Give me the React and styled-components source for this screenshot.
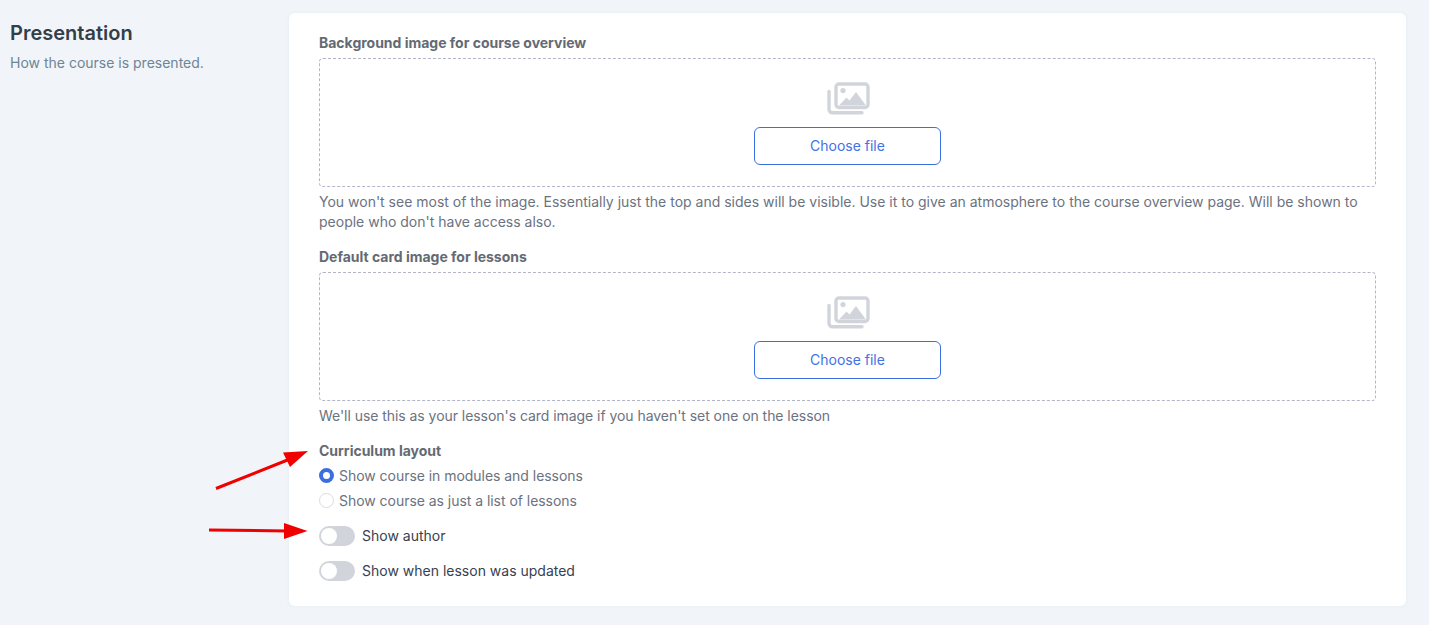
import React from "react";
import styled, { createGlobalStyle } from "styled-components";

const Global = createGlobalStyle`
  html, body { margin: 0; padding: 0; background: #f1f5f9; }
  body { font-family: Inter, "Liberation Sans", sans-serif; font-size: 14px; }
`;

const Page = styled.div`
  position: relative;
  width: 1429px;
  height: 625px;
  overflow: hidden;
  box-sizing: border-box;
  padding: 13px 23px 19px 10px;
  display: grid;
  grid-template-columns: 279px 1117px;
  background: #f1f5f9;
`;
const Intro = styled.div`
  padding-top: 6px;
`;
const Title = styled.h2`
  margin: 0;
  font-size: 20px;
  line-height: 28px;
  font-weight: 600;
  color: #333f48;
`;
const Sub = styled.p`
  margin: 6px 0 0;
  font-size: 14px;
  line-height: 20px;
  color: #6f8494;
`;
const Card = styled.section`
  background: #fff;
  border-radius: 6px;
  box-shadow: 0 0 4px rgba(60, 80, 110, 0.06);
  padding: 20px 30px 0;
  box-sizing: border-box;
  display: flex;
  flex-direction: column;
`;
const Label = styled.div`
  font-size: 14px;
  line-height: 20px;
  font-weight: 700;
  color: #646a73;
  letter-spacing: -0.01px;
  margin-bottom: 5px;
`;
const Drop = styled.div`
  height: 129px;
  box-sizing: border-box;
  border: 1px dashed #b3b5c9;
  border-radius: 4px;
  display: flex;
  flex-direction: column;
  align-items: center;
  padding-top: 23px;
`;
const Icon = styled.svg`
  width: 43px;
  height: 33px;
  margin-left: 1px;
  display: block;
  color: #d1d5db;
`;
const ChooseButton = styled.button`
  margin-top: 12px;
  width: 187px;
  height: 38px;
  background: #fff;
  border: 1px solid #3b6fe0;
  border-radius: 6px;
  color: #4172e6;
  font: 400 14px/20px Inter, sans-serif;
  letter-spacing: -0.01px;
`;
const Help = styled.p`
  margin: 5px 0 ${(p) => p.$after}px;
  font-size: 14px;
  line-height: 20px;
  color: #6b7280;
  letter-spacing: ${(p) => (p.$tight ? "-0.05px" : "normal")};
`;
const RadioGroup = styled.div`
  margin-top: -3px;
  display: flex;
  flex-direction: column;
`;
const RadioRow = styled.div`
  display: flex;
  align-items: center;
  gap: 5px;
  height: 25px;
  color: #6b7280;
  line-height: 20px;
  letter-spacing: -0.04px;
`;
const Radio = styled.span`
  width: 15px;
  height: 15px;
  box-sizing: border-box;
  border-radius: 50%;
  background: #fff;
  border: ${(p) => (p.$on ? "4.5px solid #3b6fe0" : "1px solid #d9dce1")};
`;
const ToggleRow = styled.div`
  display: flex;
  align-items: center;
  gap: 7px;
  height: 20px;
  margin-top: ${(p) => p.$top}px;
  color: #374151;
  line-height: 20px;
`;
const Track = styled.span`
  width: 36px;
  height: 20px;
  border-radius: 10px;
  background: #d1d5db;
  padding: 2px;
  box-sizing: border-box;
  display: flex;
`;
const Knob = styled.span`
  width: 16px;
  height: 16px;
  border-radius: 50%;
  background: #fff;
`;
const Arrows = styled.svg`
  position: absolute;
  inset: 0;
  width: 1429px;
  height: 625px;
  pointer-events: none;
`;

const ImageIcon = () => (
  <Icon viewBox="0 0 43 33" fill="none">
    <path d="M2 9.5v17.8a3.5 3.5 0 0 0 3.5 3.5h29.5" stroke="currentColor" strokeWidth="3.4" strokeLinecap="round" />
    <rect x="9" y="2" width="32" height="23.5" rx="3" stroke="currentColor" strokeWidth="3.4" />
    <circle cx="16" cy="8.6" r="2.6" fill="currentColor" />
    <path d="M12 23.5l7.5-8 3 3 6.5-8.5 10 13.5z" fill="currentColor" />
  </Icon>
);

const Upload = () => (
  <Drop>
    <ImageIcon />
    <ChooseButton>Choose file</ChooseButton>
  </Drop>
);

const Toggle = ({ top, children }) => (
  <ToggleRow $top={top}>
    <Track><Knob /></Track>
    {children}
  </ToggleRow>
);

export default function App() {
  return (
    <Page>
      <Global />
      <Intro>
        <Title>Presentation</Title>
        <Sub>How the course is presented.</Sub>
      </Intro>
      <Card>
        <Label>Background image for course overview</Label>
        <Upload />
        <Help $after={15}>
          You won't see most of the image. Essentially just the top and sides will be visible. Use it to give an atmosphere to the course overview page. Will be shown to people who don't have access also.
        </Help>
        <Label>Default card image for lessons</Label>
        <Upload />
        <Help $after={15} $tight>We'll use this as your lesson's card image if you haven't set one on the lesson</Help>
        <Label>Curriculum layout</Label>
        <RadioGroup>
          <RadioRow><Radio $on />Show course in modules and lessons</RadioRow>
          <RadioRow><Radio />Show course as just a list of lessons</RadioRow>
        </RadioGroup>
        <Toggle top={13}>Show author</Toggle>
        <Toggle top={15}>Show when lesson was updated</Toggle>
      </Card>
      <Arrows viewBox="0 0 1429 625">
        <path d="M216 488.5L290 459" stroke="#f00000" strokeWidth="3" />
        <path d="M308 451L283 452.5L290 467z" fill="#f00000" />
        <path d="M209 530L288 531" stroke="#f00000" strokeWidth="3" />
        <path d="M307.5 531L284 523V539z" fill="#f00000" />
      </Arrows>
    </Page>
  );
}
